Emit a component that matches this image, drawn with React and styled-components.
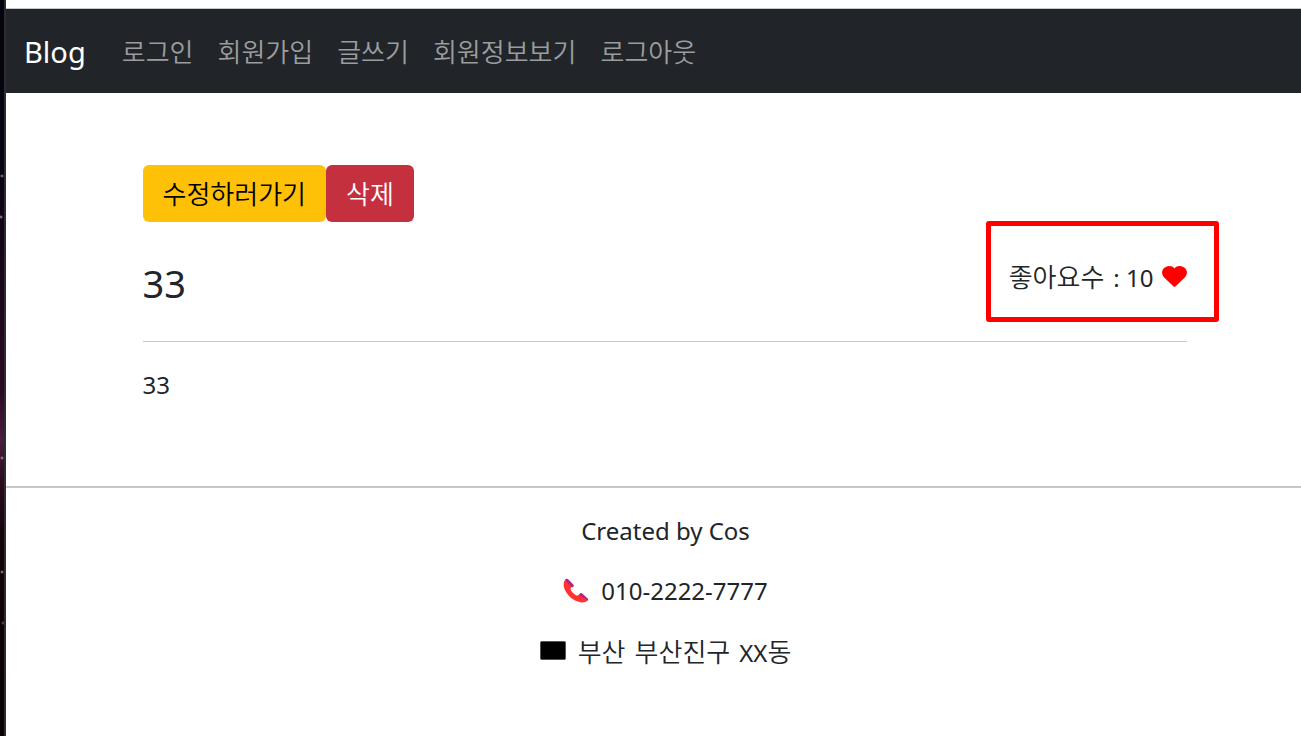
import React from 'react';
import styled, { createGlobalStyle } from 'styled-components';

const GlobalStyle = createGlobalStyle`
    * {
        box-sizing: border-box;
    }

    body {
        margin: 0;
        background: #fff;
        color: #212529;
        font-family: "Noto Sans CJK KR", "Noto Sans", sans-serif;
        font-size: 26px;
        font-weight: 350;
        line-height: 36px;
    }
`

const Desktop = styled.div`
    display: flex;
    min-height: 100vh;
    overflow: hidden;
`

const Wallpaper = styled.div`
    flex: none;
    width: 6px;
    border-right: 2px solid #2f2c31;
    background:
        radial-gradient(circle at 2px 176px, #8fa59b 0, transparent 2px),
        radial-gradient(circle at 1px 217px, #b8a9b8 0, transparent 2px),
        radial-gradient(circle at 2px 458px, #c58fae 0, transparent 2px),
        radial-gradient(circle at 2px 572px, #a79aa5 0, transparent 2px),
        radial-gradient(circle at 3px 623px, #6d6068 0, transparent 2px),
        linear-gradient(#04040e 0, #05040f 140px, #14051a 240px, #2a0a24 390px, #4a1c40 440px, #2b0c1e 480px, #120409 540px, #060203 100%);
`

const Page = styled.div`
    flex: 1;
    min-width: 0;
    padding-top: 8px;
`

const Navbar = styled.nav`
    display: flex;
    align-items: center;
    height: 85px;
    padding: 0 18px;
    border-top: 1px solid #c8c8c8;
    background: #212529;
`

const Brand = styled.a`
    margin-right: 24px;
    padding-top: 2px;
    color: #fff;
    font-family: "Noto Sans", sans-serif;
    font-size: 29px;
    font-weight: 400;
    text-decoration: none;
`

const NavList = styled.ul`
    display: flex;
    margin: 0;
    padding: 0;
    list-style: none;
`

const NavLink = styled.a`
    display: block;
    padding: 0 12px;
    color: #9b9d9e;
    text-decoration: none;
`

const Content = styled.div`
    padding-left: 22px;
`

const Container = styled.main`
    max-width: 1080px;
    margin: 0 auto;
    padding: 72px 18px 83px;
`

const Button = styled.button`
    height: 57px;
    padding: 0 20px 2px;
    border: 0;
    border-radius: 6px;
    background: ${props => props.$danger ? '#c5303f' : '#ffc107'};
    color: ${props => props.$danger ? '#fff' : '#000'};
    font: inherit;
    cursor: pointer;
`

const ButtonRow = styled.div`
    display: flex;
`

const TitleRow = styled.div`
    display: flex;
    justify-content: space-between;
    align-items: flex-start;
    padding-top: 36px;
    height: 119px;
`

const Title = styled.h3`
    margin: 0;
    font-family: "Noto Sans", sans-serif;
    font-size: 38px;
    font-weight: 400;
    line-height: 50px;
`

const Latin = styled.span`
    font-family: "Noto Sans", sans-serif;
    font-size: 24px;
    font-weight: 400;
    line-height: 24px;
`

const Likes = styled.div`
    position: relative;
    display: flex;
    align-items: center;
    gap: 8px;
`

const Highlight = styled.span`
    position: absolute;
    inset: -37px -32px -28px auto;
    width: 233px;
    border: 5px solid #f00;
    border-radius: 3px;
    pointer-events: none;
`

const Divider = styled.hr`
    margin: 0;
    border: 0;
    border-top: 1px solid #c8c9ca;
`

const Body = styled.p`
    margin: 25px 0 0;
    font-family: "Noto Sans", sans-serif;
    font-size: 24px;
    font-weight: 400;
`

const Footer = styled.footer`
    border-top: 2px solid #c8c8c8;
    padding: 25px 0 36px 24px;
`

const FooterLine = styled.p`
    display: flex;
    justify-content: center;
    align-items: center;
    gap: 12px;
    height: 36px;
    margin: 0 0 24px;
`

const Words = styled.span`
    display: flex;
    align-items: baseline;
    gap: 9px;
`

const HeartIcon = () => (
    <svg width="25" height="21" viewBox="0 0 25 21" aria-hidden="true">
        <path fill="#f00" d="M12.5 2.4C15 -.5 19.2-.7 22.2 1.4c3.4 2.5 3.7 7 .6 10L13.400 20.400a1.300 1.300 0 0 1-1.800 0L2.200 11.400C-.9 8.400-.6 3.900 2.800 1.400 5.800-.7 10-.5 12.500 2.400z" />
    </svg>
)

const PhoneIcon = () => (
    <svg width="26" height="26" viewBox="0 0 26 26" aria-hidden="true">
        <path fill="#ff3131" d="M2 2C-.2 4.800.3 9.800 3.400 14.600c3.500 5.500 9.200 9.300 15.200 9.800 2.500.1 4.700-.3 5.600-1.600l-7.700-6.600c-1 1.500-2.400 1.700-3.900.7-2.300-1.500-4.100-3.500-4.900-5.500-.4-1.200.3-2.100 1.500-2.900z" />
        <path fill="#b9217f" d="M2 2.200C2.800.6 4.200.3 5.400 1.500l4.900 4.900c.8.900.7 1.700-.4 2.900L8.600 9.300zM16 16.700c1.100-1.800 2.200-2 3.300-1.100l5.300 4.900c.8.800.8 1.500-.2 2.600z" />
    </svg>
)

const FlagIcon = () => (
    <svg width="26" height="20" viewBox="0 0 26 20" aria-hidden="true">
        <rect x="0.500" y="0.500" width="25" height="18" rx="1" fill="#000" stroke="#555" />
    </svg>
)

const menus = ['로그인', '회원가입', '글쓰기', '회원정보보기', '로그아웃'];

const App = () => {

    return (
        <Desktop>
            <GlobalStyle />
            <Wallpaper />
            <Page>
                <Navbar>
                    <Brand href="#">Blog</Brand>
                    <NavList>
                        {menus.map((menu) => (
                            <li key={menu}><NavLink href="#">{menu}</NavLink></li>
                        ))}
                    </NavList>
                </Navbar>
                <Content>
                    <Container>
                        <ButtonRow>
                            <Button type="button">수정하러가기</Button>
                            <Button type="button" $danger>삭제</Button>
                        </ButtonRow>
                        <TitleRow>
                            <Title>33</Title>
                            <Likes>
                                <Highlight />
                                <Words>
                                    <span>좋아요수</span>
                                    <Latin>: 10</Latin>
                                </Words>
                                <HeartIcon />
                            </Likes>
                        </TitleRow>
                        <Divider />
                        <Body>33</Body>
                    </Container>
                </Content>
                <Footer>
                    <FooterLine><Latin>Created by Cos</Latin></FooterLine>
                    <FooterLine><PhoneIcon /><Latin>010-2222-7777</Latin></FooterLine>
                    <FooterLine>
                        <FlagIcon />
                        <Words>
                            <span>부산</span>
                            <span>부산진구</span>
                            <span><Latin>XX</Latin>동</span>
                        </Words>
                    </FooterLine>
                </Footer>
            </Page>
        </Desktop>
    )
}


export default App;
